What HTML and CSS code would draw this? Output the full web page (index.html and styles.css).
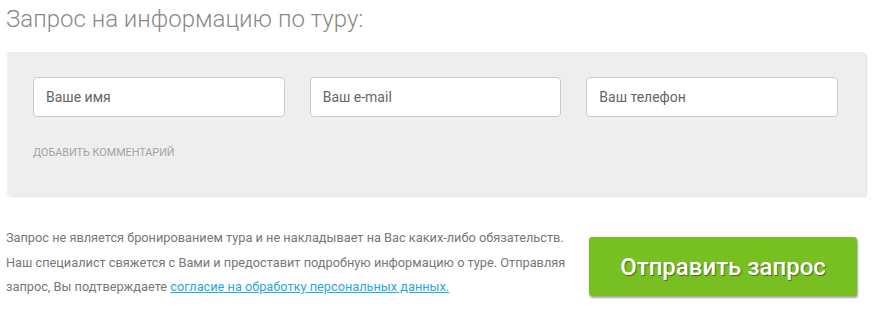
FILE: index.html
```html
<!DOCTYPE html>
<html lang="ru">
<head>
<meta charset="utf-8">
<link rel="stylesheet" href="styles.css">
</head>
<body>
<div class="wrap">
  <h2 class="title">Запрос на информацию по туру:</h2>
  <div class="panel">
    <div class="fields">
      <input class="field" type="text" placeholder="Ваше имя">
      <input class="field" type="text" placeholder="Ваш e-mail">
      <input class="field" type="text" placeholder="Ваш телефон">
    </div>
    <a class="comment" href="#">Добавить комментарий</a>
  </div>
  <div class="footer">
    <p class="note">Запрос не является бронированием тура и не накладывает на Вас каких-либо обязательств. Наш специалист свяжется с Вами и предоставит подробную информацию о туре. Отправляя запрос, Вы подтверждаете <a class="link" href="#">согласие на обработку персональных данных.</a></p>
    <button class="send" type="button">Отправить запрос</button>
  </div>
</div>
</body>
</html>
```
FILE: styles.css
```css
* { box-sizing: border-box; }
html, body { margin: 0; padding: 0; background: #fff; }
body { font-family: Roboto, "Noto Sans", Arial, sans-serif; color: #777; }
.wrap { width: 866px; padding-left: 7px; }
.title {
  margin: 0;
  padding: 4px 0 0 0;
  margin-left: -1px;
  font-weight: 300;
  font-size: 24px;
  line-height: 30px;
  color: #8a8a8a;
  height: 52px;
}
.panel {
  background: #eee;
  border-radius: 3px;
  box-shadow: 1px 1px 1px #e2e2e2;
  height: 144px;
  padding: 25px 28px 0 26px;
}
.fields {
  display: grid;
  grid-template-columns: 1fr 1fr 1fr;
  column-gap: 25px;
}
.field {
  height: 40px;
  border: 1px solid #cbcbcb;
  border-radius: 4px;
  background: #fff;
  padding: 0 12px;
  font-family: Roboto, "Noto Sans", Arial, sans-serif;
  font-size: 14px;
  color: #555;
  outline: none;
}
.field::placeholder { color: #666; opacity: 1; }
.comment {
  display: inline-block;
  margin-top: 29px;
  font-size: 10.8px;
  text-transform: uppercase;
  color: #a3a3a3;
  text-decoration: none;
}
.footer {
  display: flex;
  justify-content: space-between;
  align-items: flex-start;
  padding-top: 41px;
}
.note {
  margin: -11px 0 0 -1px;
  width: 572px;
  font-size: 12.75px;
  line-height: 24.5px;
  color: #777;
}
.link { color: #29a8e0; text-decoration: underline; }
.send {
  width: 268px;
  height: 59px;
  margin-right: 9px;
  border: none;
  border-radius: 3px;
  background: #78c022;
  box-shadow: 1px 2px 2px rgba(0,0,0,0.35);
  color: #fff;
  font-family: Roboto, "Noto Sans", Arial, sans-serif;
  font-weight: 500;
  font-size: 24px;
  text-shadow: 1px 1px 1px rgba(0,0,0,0.45);
  cursor: pointer;
}
```
